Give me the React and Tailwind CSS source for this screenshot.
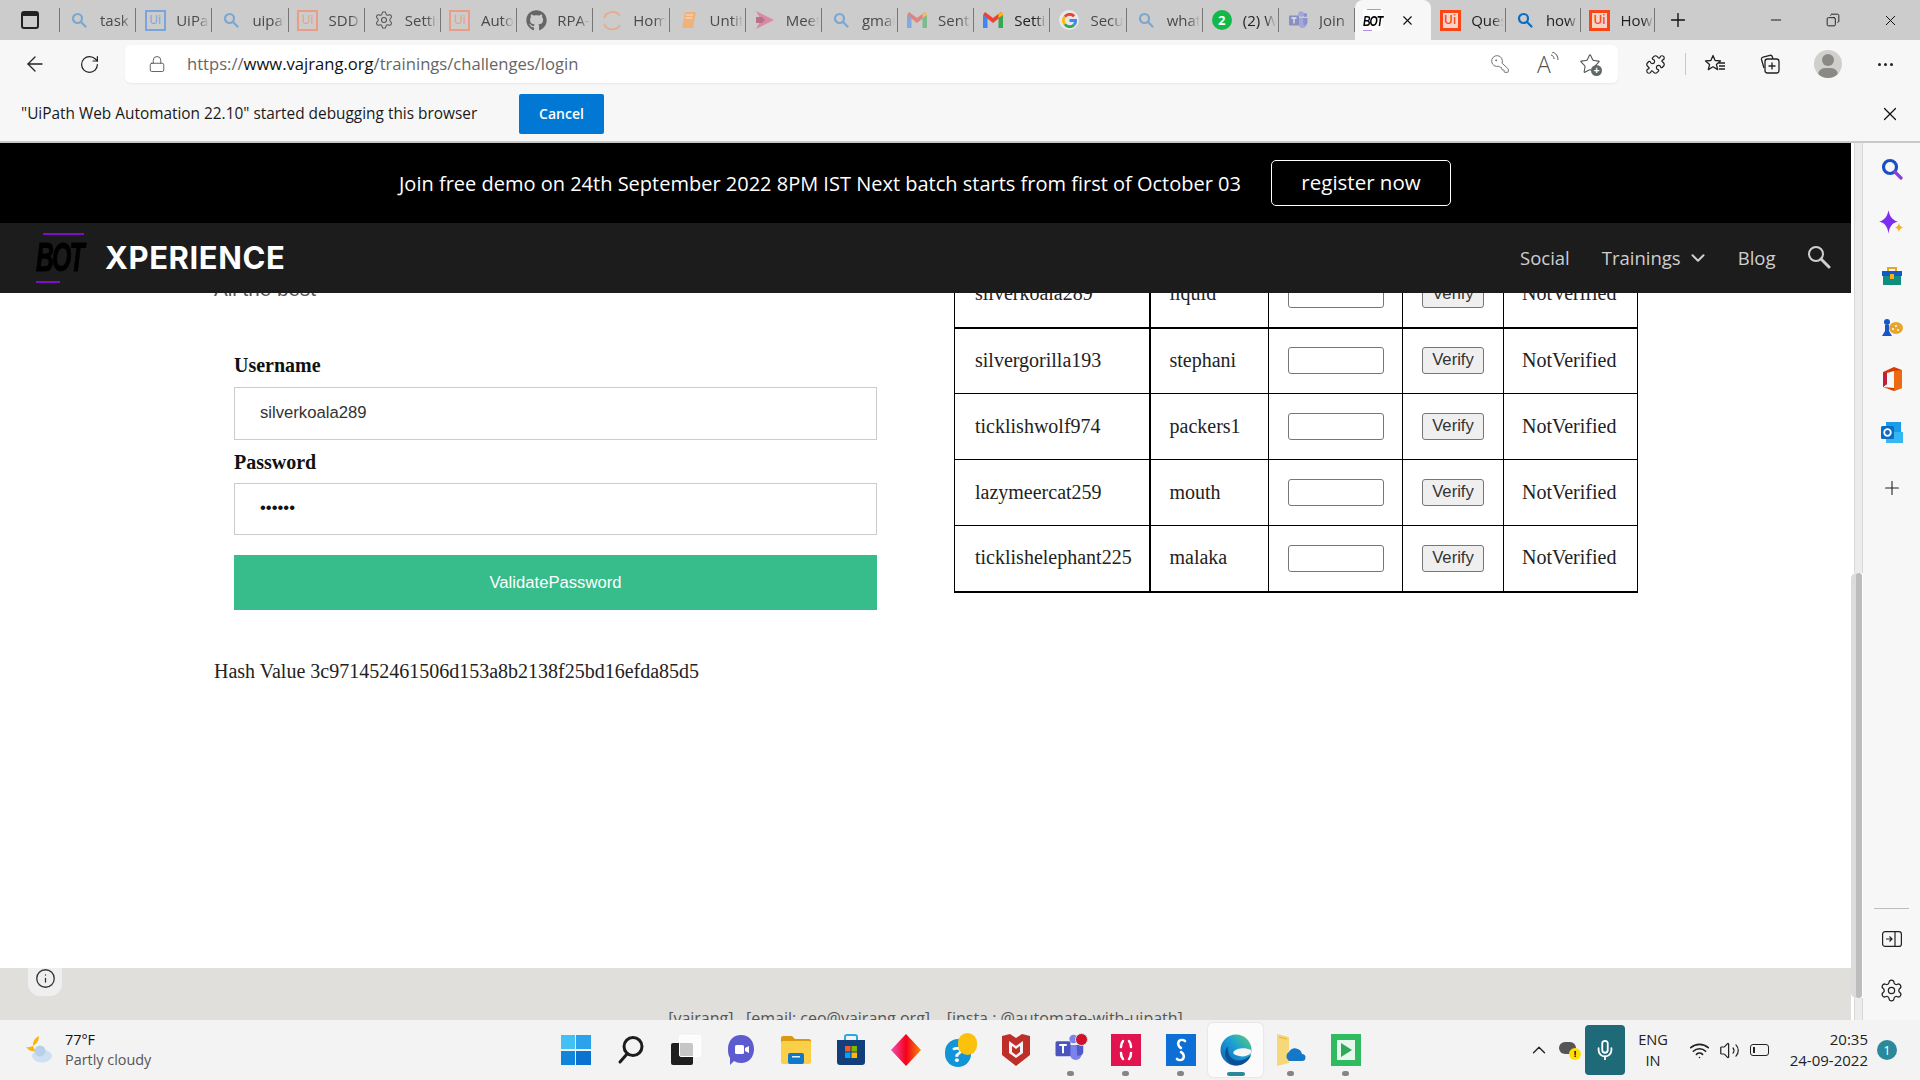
import React from 'react';
import { FaGithub } from 'react-icons/fa';
import {
  ArrowLeft, RotateCw, Lock, KeyRound, Puzzle, Star, ChevronDown, ChevronUp, X, Plus, Minus,
  Settings, Info, Mic, Wifi, Volume2, Copy,
} from 'lucide-react';

// Small favicon drawings used in the tab strip
const UiBox = ({ color, strong }) => (
  <span className={`flex w-[21px] h-[21px] items-center justify-center text-[12px] leading-none font-['Open_Sans',sans-serif] ${strong ? 'border-[3px] font-semibold bg-[#f6d5c8]' : 'border-2'}`} style={{ borderColor: color, color }}>
    Ui
  </span>
);

const Mag = ({ color = '#0f6cbd', size = 16 }) => (
  <svg width={size} height={size} viewBox="0 0 16 16" fill="none" stroke={color} strokeWidth="2.2">
    <circle cx="6.5" cy="6.5" r="4.5" />
    <path d="M10 10l4.5 4.5" strokeLinecap="round" />
  </svg>
);

const Swirl = () => (
  <svg width="22" height="22" viewBox="0 0 22 22" fill="none" stroke="#e9a98c" strokeWidth="1.8">
    <path d="M3 9a9 9 0 0 1 16-2" />
    <path d="M3 15a9 9 0 0 0 16 1" />
  </svg>
);

const Notebook = () => (
  <svg width="20" height="20" viewBox="0 0 20 20">
    <path d="M6 2h11l-3 16H3z" fill="#eeb27a" />
    <path d="M7 5h7M6.400 8h7" stroke="#fbe0c0" strokeWidth="1.200" />
  </svg>
);

const MeetArrow = () => (
  <svg width="20" height="20" viewBox="0 0 20 20">
    <path d="M1 1l18 9-18 9 5-9z" fill="#d98aa4" />
    <path d="M1 7h6l3 3-3 3H1z" fill="#b8708c" />
  </svg>
);

const GmailIcon = ({ faded }) => (
  <svg width="20" height="18" viewBox="0 0 20 16" opacity={faded ? 0.5 : 1}>
    <path d="M0 3v13h4.500V6z" fill="#4285f4" />
    <path d="M20 3v13h-4.500V6z" fill="#34a853" />
    <path d="M0 3l10 8 10-8-2-3-8 6-8-6z" fill="#ea4335" />
    <path d="M15.500 6l4.500-3-2-3-2.500 2z" fill="#fbbc04" />
  </svg>
);

const GoogleIcon = () => (
  <span className="flex w-[20px] h-[20px] items-center justify-center rounded-full bg-[#e8e8e8]">
    <svg width="15" height="15" viewBox="0 0 16 16" fill="none" strokeWidth="3">
      <path d="M13 3.500A6.500 6.500 0 0 0 3 4" stroke="#ea4335" />
      <path d="M3 4a6.500 6.500 0 0 0 0 8" stroke="#fbbc04" />
      <path d="M3 12a6.500 6.500 0 0 0 10 .5" stroke="#34a853" />
      <path d="M13 12.500A6.500 6.500 0 0 0 14.500 8H8" stroke="#4285f4" />
    </svg>
  </span>
);

const WhatsApp = () => (
  <span className="flex w-[20px] h-[20px] items-center justify-center rounded-full bg-[#12b94a] text-white text-[13px] font-bold leading-none font-['Open_Sans',sans-serif]">2</span>
);

const TeamsIcon = ({ size = 20, faded }) => (
  <svg width={size} height={size} viewBox="0 0 20 20" opacity={faded ? 0.5 : 1}>
    <circle cx="13" cy="4" r="2.800" fill="#7b83eb" />
    <circle cx="17.200" cy="5" r="2" fill="#5059c9" />
    <path d="M10 8h8.500v6a4 4 0 0 1-8 0z" fill="#7b83eb" />
    <path d="M15 8h4.500v5a3 3 0 0 1-4 2z" fill="#5059c9" />
    <rect x="1" y="5.500" width="10" height="10" rx="1" fill="#4b53bc" />
    <path d="M3.500 8h5M6 8v5.500" stroke="#fff" strokeWidth="1.300" />
  </svg>
);

const BotMark = ({ className }) => (
  <span className={className}>BOT</span>
);

const tabs = [
  { icon: <Mag color="#7ba7cf" />, label: 'task' },
  { icon: <UiBox color="#79a5dc" />, label: 'UiPath' },
  { icon: <Mag color="#7ba7cf" />, label: 'uipath' },
  { icon: <UiBox color="#eb9c84" />, label: 'SDD' },
  { icon: <Settings size={20} strokeWidth={1.3} color="#555" />, label: 'Settings' },
  { icon: <UiBox color="#eb9c84" />, label: 'Auto' },
  { icon: <FaGithub size={21} color="#666" />, label: 'RPA-' },
  { icon: <Swirl />, label: 'Home' },
  { icon: <Notebook />, label: 'Untitled' },
  { icon: <MeetArrow />, label: 'Meet' },
  { icon: <Mag color="#7ba7cf" />, label: 'gmail' },
  { icon: <GmailIcon faded />, label: 'Sent' },
  { icon: <GmailIcon />, label: 'Settings', dark: true },
  { icon: <GoogleIcon />, label: 'Secu' },
  { icon: <Mag color="#7ba7cf" />, label: 'what' },
  { icon: <WhatsApp />, label: '(2) W', dark: true },
  { icon: <TeamsIcon faded />, label: 'Join' },
];

const endTabs = [
  { icon: <UiBox color="#fa4616" strong />, label: 'Ques', dark: true },
  { icon: <Mag color="#0f6cbd" />, label: 'how', dark: true },
  { icon: <UiBox color="#fa4616" strong />, label: 'How', dark: true },
];

const Tab = ({ tab, width }) => (
  <div className={`${width} h-[40px] flex items-center shrink-0 relative`}>
    <div className="ml-[8px] w-[22px] h-[22px] shrink-0 flex items-center justify-center">{tab.icon}</div>
    <div className={`ml-[10px] w-[33px] overflow-hidden whitespace-nowrap text-[15px] [mask-image:linear-gradient(to_right,black_65%,transparent)] ${tab.dark ? 'text-[#222]' : 'text-[#4a4a4a]'}`}>
      {tab.label}
    </div>
    <div className="absolute right-0 top-[8px] h-[24px] w-[1px] bg-[#777]" />
  </div>
);

const TabStrip = () => (
  <div className="h-[40px] bg-[#cccccc] flex items-center shrink-0 font-['Open_Sans',sans-serif]">
    <div className="w-[60px] h-[40px] shrink-0 relative flex items-center pl-[21px]">
      <div className="w-[18px] h-[18px] rounded-[3px] border-2 border-[#222] border-t-[5px]" />
      <div className="absolute right-0 top-[8px] h-[24px] w-[1px] bg-[#777]" />
    </div>
    {tabs.map((t, i) => <Tab key={i} tab={t} width="w-[76.2px]" />)}
    <div className="w-[76px] h-[40px] shrink-0 bg-[#f7f7f7] rounded-t-lg flex items-center">
      <div className="ml-[8px] w-[20px] h-[22px] bg-white flex flex-col justify-between">
        <div className="ml-[4px] w-[14px] h-[1px] bg-[#b98be8]" />
        <BotMark className="text-[15px] leading-none italic font-black text-black tracking-[-1.5px] scale-x-[0.7] origin-left font-['Liberation_Sans',sans-serif]" />
        <div className="w-[9px] h-[1px] bg-[#b98be8]" />
      </div>
      <X size={15} strokeWidth={1.8} className="ml-[17px] text-[#111]" />
    </div>
    {endTabs.map((t, i) => <Tab key={i} tab={t} width="w-[74.7px]" />)}
    <Plus size={22} strokeWidth={1.5} className="ml-[12px] text-[#111]" />
    <Minus size={16} strokeWidth={1.4} className="ml-[79px] text-[#111]" />
    <Copy size={14} strokeWidth={1.5} className="ml-[42px] text-[#111] -scale-x-100" />
    <X size={17} strokeWidth={1.4} className="ml-[42px] text-[#111]" />
  </div>
);

const Slot = ({ className = '', children }) => (
  <div className={`w-[40px] h-[40px] shrink-0 flex items-center justify-center ${className}`}>{children}</div>
);

const StarLines = () => (
  <svg width="22" height="22" viewBox="0 0 22 22" fill="none" stroke="#222" strokeWidth="1.300">
    <path d="M9 2.500l2.100 5 5.400.4-4.100 3.500 1.300 5.200L9 13.800l-4.700 2.800 1.300-5.200-4.100-3.500 5.400-.4z" strokeLinejoin="round" />
    <path d="M14.500 10H21M15 13h6M15 16h6" />
  </svg>
);

const Collections = () => (
  <svg width="22" height="22" viewBox="0 0 22 22" fill="none" stroke="#222" strokeWidth="1.300">
    <path d="M5 15 2.500 6.500a2 2 0 0 1 1.500-2.400L11 2.300a2 2 0 0 1 2.300 1.400L14 6" />
    <rect x="6" y="6" width="14" height="14" rx="2.500" />
    <path d="M13 9.500v7M9.500 13h7" />
  </svg>
);

const FavPlus = () => (
  <span className="relative w-[24px] h-[24px] flex items-center justify-center">
    <Star size={22} strokeWidth={1.2} className="text-[#555]" />
    <span className="absolute right-0 bottom-0 w-[11px] h-[11px] rounded-full bg-[#666] text-white text-[10px] leading-[10px] text-center font-bold">+</span>
  </span>
);

const ReadAloud = () => (
  <span className="relative text-[23px] leading-none text-[#555] font-['Open_Sans',sans-serif] font-light">
    A
    <svg className="absolute -right-[9px] -top-[1px]" width="10" height="12" viewBox="0 0 10 12" fill="none" stroke="#555" strokeWidth="1">
      <path d="M1 3c2 .5 3 2 3 4M2 0c4 1 6 4 6 8" />
    </svg>
  </span>
);

const Toolbar = () => (
  <div className="h-[48px] bg-[#f7f7f7] flex items-center shrink-0 pl-[10px] font-['Open_Sans',sans-serif]">
    <div className="w-[50px] flex justify-center"><ArrowLeft size={24} strokeWidth={1.3} className="text-[#222]" /></div>
    <div className="w-[50px] ml-[4px] flex justify-center"><RotateCw size={21} strokeWidth={1.4} className="text-[#222]" /></div>
    <div className="ml-[11px] w-[1493px] h-[38px] bg-white rounded-[6px] flex items-center pl-[22px] pr-[6px] shadow-[0_1px_2px_rgba(0,0,0,0.06)]">
      <div className="w-[20px] flex justify-center"><Lock size={18} strokeWidth={1.2} className="text-[#555]" /></div>
      <div className="ml-[20px] flex-1 text-[16.600px] text-[#666] whitespace-nowrap">
        https://<span className="text-[#111]">www.vajrang.org</span>/trainings/challenges/login
      </div>
      <div className="w-[44px] flex justify-center -ml-[2px]"><KeyRound size={20} strokeWidth={1.1} className="text-[#666] -scale-x-100" /></div>
      <div className="w-[44px] flex justify-center mr-[2px]"><ReadAloud /></div>
      <div className="w-[44px] flex justify-center"><FavPlus /></div>
    </div>
    <Slot className="ml-[17px]"><Puzzle size={21} strokeWidth={1.4} className="text-[#222]" /></Slot>
    <div className="ml-[10px] w-[1px] h-[22px] bg-[#c8c8c8]" />
    <Slot className="ml-[9px]"><StarLines /></Slot>
    <Slot className="ml-[15px]"><Collections /></Slot>
    <Slot className="ml-[18px]">
      <span className="relative w-[28px] h-[28px] rounded-full bg-[#d0cfcb] overflow-hidden block">
        <span className="absolute left-[8px] top-[4px] w-[12px] h-[12px] rounded-full bg-[#8b8985]" />
        <span className="absolute left-[4px] top-[18px] w-[20px] h-[14px] rounded-full bg-[#8b8985]" />
      </span>
    </Slot>
    <Slot className="ml-[17px]">
      <span className="flex gap-[3px]">
        <span className="w-[3px] h-[3px] rounded-full bg-[#222]" />
        <span className="w-[3px] h-[3px] rounded-full bg-[#222]" />
        <span className="w-[3px] h-[3px] rounded-full bg-[#222]" />
      </span>
    </Slot>
  </div>
);

const InfoBar = () => (
  <div className="h-[55px] bg-[#f7f7f7] flex items-center shrink-0 pl-[21px] pb-[2px] border-b-[2px] border-[#c9c9c9] font-['Open_Sans',sans-serif]">
    <span className="w-[498px] text-[15.400px] text-[#1a1a1a] whitespace-nowrap">"UiPath Web Automation 22.10" started debugging this browser</span>
    <button className="w-[85px] h-[40px] bg-[#0078d4] rounded-[2px] text-white text-[14px] font-semibold">Cancel</button>
    <X size={22} strokeWidth={1.3} className="ml-[1275px] text-[#111]" />
  </div>
);

const rows = [
  ['silverkoala289', 'liquid'],
  ['silvergorilla193', 'stephani'],
  ['ticklishwolf974', 'packers1'],
  ['lazymeercat259', 'mouth'],
  ['ticklishelephant225', 'malaka'],
];

const ChallengeTable = () => (
  <table className="table-fixed border-collapse w-[683px] -mt-[32px] text-[20px] text-[#222] font-['Liberation_Serif',serif]">
    <colgroup>
      <col className="w-[195px]" />
      <col className="w-[119px]" />
      <col className="w-[134px]" />
      <col className="w-[101px]" />
      <col className="w-[134px]" />
    </colgroup>
    <tbody>
      {rows.map(([user, pass], i) => (
        <tr key={user} className={`h-[66px] ${i === 0 || i === rows.length - 1 ? 'border-b-[2px] border-black' : ''}`}>
          <td className="border border-black border-r-[2px] pl-[20px] pb-[2px] whitespace-nowrap">{user}</td>
          <td className="border border-black pl-[19px] pb-[2px]">{pass}</td>
          <td className="border border-black pl-[19px]">
            <input className="block w-[96px] h-[27px] bg-white border border-[#767676] rounded-[3px]" />
          </td>
          <td className="border border-black pl-[19px]">
            <button className="block w-[62px] h-[27px] bg-[#efefef] border border-[#767676] rounded-[3px] text-[16.67px] leading-none text-[#333] font-['Liberation_Sans',sans-serif]">Verify</button>
          </td>
          <td className="border border-black pl-[18px] pb-[2px]">NotVerified</td>
        </tr>
      ))}
    </tbody>
  </table>
);

const LoginForm = () => (
  <div className="w-[954px] shrink-0 pl-[214px]">
    <div className="-mt-[16px] h-[25px] text-[20.600px] leading-[24px] text-[#555] font-['Liberation_Sans',sans-serif]">All the best</div>
    <div className="pl-[20px] w-[663px]">
      <label className="block mt-[51px] h-[24px] text-[20px] leading-[24px] font-bold text-[#111] font-['Liberation_Serif',serif]">Username</label>
      <input readOnly value="silverkoala289" className="block mt-[10px] w-full h-[53px] pl-[25px] pb-[1px] border border-[#cccccc] text-[16.67px] text-[#333] font-['Liberation_Sans',sans-serif] outline-none" />
      <label className="block mt-[10px] h-[24px] text-[20px] leading-[24px] font-bold text-[#111] font-['Liberation_Serif',serif]">Password</label>
      <input readOnly type="password" value="secret" className="block mt-[9px] w-full h-[52px] pl-[25px] pb-[2px] border border-[#cccccc] text-[16.67px] text-[#111] font-['Liberation_Sans',sans-serif] outline-none" />
      <button className="block mt-[20px] w-full h-[55px] bg-[#37bc8b] text-white text-[16.67px] font-['Liberation_Sans',sans-serif]">ValidatePassword</button>
    </div>
    <p className="mt-[49px] text-[20px] leading-[24px] text-[#222] whitespace-nowrap font-['Liberation_Serif',serif]">Hash Value 3c971452461506d153a8b2138f25bd16efda85d5</p>
  </div>
);

const Page = () => (
  <div className="flex-1 min-w-0 flex flex-col">
    <div className="h-[80px] bg-black shrink-0 flex items-center pl-[399px] font-['Open_Sans',sans-serif]">
      <span className="w-[872px] mt-[1px] text-[20px] font-medium text-white whitespace-nowrap">Join free demo on 24th September 2022 8PM IST Next batch starts from first of October 03</span>
      <button className="w-[180px] h-[46px] border border-white rounded-[5px] pb-[2px] text-[20.500px] font-medium text-white">register now</button>
    </div>
    <div className="h-[70px] bg-[#1c1c1c] shrink-0 flex items-center pl-[36px] font-['Open_Sans',sans-serif]">
      <div className="relative w-[49px] h-[50px]">
        <div className="absolute left-[7px] top-0 w-[41px] h-[2px] bg-[#7a10c8]" />
        <BotMark className="absolute left-0 top-[5px] inline-block origin-left text-[40px] leading-[38px] font-black italic text-black tracking-[-3px] scale-x-[0.62] [-webkit-text-stroke:1px_black] font-['Liberation_Sans',sans-serif]" />
        <div className="absolute left-0 bottom-0 w-[24px] h-[2px] bg-[#7a10c8]" />
      </div>
      <span className="ml-[20px] w-[1415px] -mt-[1px] text-[31px] leading-none font-bold tracking-[0.6px] text-white font-['Inter',sans-serif]">XPERIENCE</span>
      <span className="text-[18.500px] text-[#cfcfcf]">Social</span>
      <span className="ml-[32px] text-[18.500px] text-[#cfcfcf]">Trainings</span>
      <ChevronDown size={22} strokeWidth={2.2} className="ml-[6px] text-[#cfcfcf]" />
      <span className="ml-[29px] text-[18.500px] text-[#cfcfcf]">Blog</span>
      <svg width="24" height="24" viewBox="0 0 24 24" fill="none" stroke="#cfcfcf" className="ml-[31px] -mt-[2px]">
        <circle cx="9" cy="9" r="7" strokeWidth="2" />
        <path d="M14 14l8 8" strokeWidth="3" strokeLinecap="round" />
      </svg>
    </div>
    <div className="flex-1 min-h-0 overflow-hidden bg-white flex">
      <LoginForm />
      <div><ChallengeTable /></div>
    </div>
    <div className="h-[52px] shrink-0 bg-[#e0dfdb] relative overflow-hidden text-center pt-[40px] text-[16px] leading-[20px] text-[#555] whitespace-pre font-['Open_Sans',sans-serif]">
      {'[vajrang]   [email: ceo@vajrang.org]    [insta : @automate-with-uipath]'}
      <div className="absolute left-[28px] top-0 w-[34px] h-[28px] pb-[8px] rounded-b-[12px] bg-[#efefef] flex items-center justify-center">
        <Info size={21} strokeWidth={1.5} className="text-[#333]" />
      </div>
    </div>
  </div>
);

const Scrollbar = () => (
  <div className="w-[12px] shrink-0 bg-white flex flex-col">
    <div className="h-[430px] shrink-0 ml-[3px] w-[9px] bg-[#ececec] border-l border-r border-[#d8d8d8]" />
    <div className="h-[425px] shrink-0 w-[11px] rounded-full bg-[#dcdcdc] flex justify-end">
      <div className="w-[6px] h-full rounded-full bg-[#bdbdbd]" />
    </div>
    <div className="flex-1 ml-[3px] w-[9px] bg-[#ececec] border-l border-r border-[#d8d8d8]" />
  </div>
);

const SideSlot = ({ className = '', children }) => (
  <div className={`h-[53px] shrink-0 flex items-center justify-center ${className}`}>{children}</div>
);

const Sidebar = () => (
  <div className="w-[57px] shrink-0 bg-[#f7f7f7] flex flex-col">
    <SideSlot className="pb-[2px]">
      <svg width="22" height="22" viewBox="0 0 22 22" fill="none" strokeWidth="3.200">
        <circle cx="9" cy="9" r="6.500" stroke="#1b4fc4" />
        <path d="M14 14l6 6" stroke="#8a3fd8" strokeLinecap="round" />
      </svg>
    </SideSlot>
    <SideSlot>
      <svg width="26" height="28" viewBox="0 0 22 24">
        <path d="M8 1c1 5 3 8 8 10-5 1-7 4-8 10-1-6-3-9-8-10 5-2 7-5 8-10z" fill="#7c2df0" />
        <path d="M17 12c.4 2 1 3 3.500 4-2.500.5-3 1.500-3.500 4-.5-2.500-1-3.500-3.500-4 2.500-1 3-2 3.500-4z" fill="#f6b21b" />
      </svg>
    </SideSlot>
    <SideSlot>
      <svg width="22" height="20" viewBox="0 0 22 20">
        <path d="M7 5V2h8v3" fill="none" stroke="#e7a52a" strokeWidth="2" />
        <rect x="1" y="5" width="20" height="5" fill="#1458c8" />
        <rect x="2" y="10" width="18" height="9" fill="#0f8d7e" />
        <rect x="9" y="8" width="4" height="5" fill="#f3b11e" />
      </svg>
    </SideSlot>
    <SideSlot className="pb-[2px]">
      <svg width="22" height="20" viewBox="0 0 22 20">
        <circle cx="6" cy="4" r="3" fill="#1458c8" />
        <path d="M4 7h4v6l3 5H1l3-5z" fill="#1458c8" />
        <ellipse cx="15" cy="10" rx="7" ry="6" fill="#e7a52a" />
        <circle cx="15" cy="8" r="1" fill="#fff" /><circle cx="12" cy="11" r="1" fill="#fff" /><circle cx="17" cy="12" r="1" fill="#fff" />
      </svg>
    </SideSlot>
    <SideSlot className="pb-[6px]">
      <svg width="20" height="24" viewBox="0 0 20 24">
        <path d="M12 0l8 3v18l-8 3-11-4 11 1V4L5 6v11l-4 3V5z" fill="#d83b01" />
        <path d="M1 5l4 1v11l-4 3z" fill="#c01e3c" />
        <path d="M12 4l8-1v18l-8 3z" fill="#eb6a12" />
      </svg>
    </SideSlot>
    <SideSlot className="pb-[4px]">
      <svg width="22" height="21" viewBox="0 0 22 21">
        <rect x="5" y="0" width="15" height="10" fill="#1a9ce8" />
        <path d="M5 10h17v11H5z" fill="#35b8f1" />
        <rect x="0" y="4" width="13" height="13" rx="1.500" fill="#0a6cc4" />
        <circle cx="6.500" cy="10.500" r="3.300" fill="none" stroke="#fff" strokeWidth="1.800" />
      </svg>
    </SideSlot>
    <SideSlot><Plus size={22} strokeWidth={1.2} className="text-[#222]" /></SideSlot>
    <div className="flex-1" />
    <div className="mx-[11px] h-[1px] bg-[#bdbdbd]" />
    <div className="h-[60px] shrink-0 flex items-center justify-center">
      <svg width="20" height="16" viewBox="0 0 20 16" fill="none" stroke="#222" strokeWidth="1.200">
        <rect x=".6" y=".6" width="18.800" height="14.800" rx="2.500" />
        <path d="M13 1v14M4 8h6M7.500 5.500 10 8l-2.500 2.500" />
      </svg>
    </div>
    <div className="h-[42px] shrink-0 flex items-center justify-center">
      <Settings size={25} strokeWidth={1.2} className="text-[#222]" />
    </div>
    <div className="h-[9px] shrink-0" />
  </div>
);

// Taskbar drawings, each about 30px
const IconStart = () => (
  <div className="grid grid-cols-2 gap-[1.500px] w-[30px] h-[30px]">
    <div className="bg-[#45c0f5]" /><div className="bg-[#2aa2ec]" /><div className="bg-[#0f86dc]" /><div className="bg-[#0a72cf]" />
  </div>
);
const IconSearch = () => (
  <svg width="28" height="30" viewBox="0 0 28 30" fill="none" stroke="#1c1c1c" strokeWidth="3">
    <circle cx="16" cy="11.500" r="9" />
    <path d="M10 19l-7 8" strokeLinecap="round" />
  </svg>
);
const IconTaskView = () => (
  <div className="relative w-[30px] h-[30px]">
    <div className="absolute left-0 bottom-0 w-[22px] h-[22px] rounded-[2px] bg-[#1e1e1e]" />
    <div className="absolute right-0 top-0 w-[22px] h-[22px] rounded-[2px] bg-white/75 border border-white" />
  </div>
);
const IconChat = () => (
  <svg width="30" height="32" viewBox="0 0 30 32">
    <path d="M15 1c8 0 13 6 13 14s-5 14-13 14c-3 0-5-1-7-2l-4 4v-7C2 21 2 18 2 15 2 7 7 1 15 1z" fill="#5d5bd0" />
    <rect x="9" y="11" width="9" height="9" rx="1.500" fill="#fff" />
    <path d="M19 14l4-2v7l-4-2z" fill="#fff" />
  </svg>
);
const IconFolder = () => (
  <svg width="30" height="28" viewBox="0 0 30 28">
    <path d="M0 2a2 2 0 0 1 2-2h9l3 3h14a2 2 0 0 1 2 2v3H0z" fill="#d99a10" />
    <rect x="0" y="5" width="30" height="23" rx="2" fill="#fbcf48" />
    <rect x="7" y="17" width="16" height="11" rx="2" fill="#0f78c8" />
    <rect x="11" y="20" width="8" height="1.500" fill="#dff1ff" />
  </svg>
);
const IconStore = () => (
  <svg width="30" height="32" viewBox="0 0 30 32">
    <path d="M9 6V3a2 2 0 0 1 2-2h8a2 2 0 0 1 2 2v3" fill="none" stroke="#29a8e8" strokeWidth="2" />
    <path d="M1 6h28v22a3 3 0 0 1-3 3H4a3 3 0 0 1-3-3z" fill="#123f7c" />
    <rect x="9" y="12" width="5.500" height="5.500" fill="#ef5a2b" /><rect x="15.500" y="12" width="5.500" height="5.500" fill="#7eb900" />
    <rect x="9" y="18.500" width="5.500" height="5.500" fill="#00a4ef" /><rect x="15.500" y="18.500" width="5.500" height="5.500" fill="#ffb900" />
  </svg>
);
const IconDiamond = () => (
  <svg width="30" height="32" viewBox="0 0 30 32">
    <defs>
      <linearGradient id="dg" x1="0" x2="1">
        <stop offset="0" stopColor="#f24fb0" /><stop offset=".5" stopColor="#f5001d" /><stop offset="1" stopColor="#f58a0a" />
      </linearGradient>
    </defs>
    <path d="M15 0l15 16-15 16L0 16z" fill="url(#dg)" />
  </svg>
);
const IconHelp = () => (
  <div className="relative w-[32px] h-[34px]">
    <div className="absolute left-0 bottom-0 w-[26px] h-[28px] rounded-full bg-[#1295d8] text-white text-[22px] leading-[28px] font-bold text-center font-['Open_Sans',sans-serif]">?</div>
    <div className="absolute right-0 top-0 w-[19px] h-[22px] rounded-full bg-[#fcc10c]" />
  </div>
);
const IconMcAfee = () => (
  <svg width="28" height="32" viewBox="0 0 28 32">
    <path d="M0 2l8-2 6 4 6-4 8 2v19L14 32 0 21z" fill="#bf2f2a" />
    <path d="M7 7l7 5 7-5v12l-7 5-7-5z" fill="#f4f3f3" />
    <path d="M10 12l4 3 4-3v6l-4 3-4-3z" fill="#bf2f2a" />
  </svg>
);
const IconTeams = () => (
  <div className="relative w-[34px] h-[34px]">
    <TeamsIcon size={30} />
    <div className="absolute right-0 top-0 w-[13px] h-[13px] rounded-full bg-[#d1112b] border border-[#dddddd]" />
  </div>
);
const IconRedTile = () => (
  <div className="w-[30px] h-[32px] bg-[#e2144f] flex items-center justify-center">
    <svg width="18" height="24" viewBox="0 0 18 24" fill="none" stroke="#fff" strokeWidth="2.500" strokeLinecap="round">
      <path d="M6 3a9 9 0 0 0-2 6M12 3a9 9 0 0 1 2 6M4 15a9 9 0 0 0 2 6M14 15a9 9 0 0 1-2 6" />
    </svg>
  </div>
);
const IconBlueTile = () => (
  <div className="w-[30px] h-[32px] bg-[#0d6fd6] flex items-center justify-center">
    <svg width="18" height="26" viewBox="0 0 18 26" fill="none" stroke="#fff" strokeWidth="2.600" strokeLinecap="round">
      <path d="M13 4a4 3 0 0 0-6 0c-2 3 0 6 2 7M5 22a4 3 0 0 0 6 0c2-3 0-6-2-7" />
    </svg>
  </div>
);
const IconEdge = () => (
  <svg width="32" height="32" viewBox="0 0 32 32">
    <defs>
      <linearGradient id="eg" x1="0" y1="1" x2="1" y2="0">
        <stop offset="0" stopColor="#0b5fae" /><stop offset=".55" stopColor="#1b9ed8" /><stop offset="1" stopColor="#5fd36a" />
      </linearGradient>
    </defs>
    <circle cx="16" cy="16" r="15.500" fill="url(#eg)" />
    <path d="M31 21c-2 6-8 10.500-15 10.500-3 0-5-1-7-3-5-5-5-13-1-16-1 7 3 14 10 14 5 0 9-2 13-5.500z" fill="#0b4f96" />
    <path d="M14 17c3-3 11-4 17-1v3c-3 3-8 4-12 3-4-1-7-2-5-5z" fill="#f6f6f6" />
  </svg>
);
const IconFolderCloud = () => (
  <svg width="30" height="32" viewBox="0 0 30 32">
    <path d="M1 0l12 3v26L1 32z" fill="#f6d77a" />
    <path d="M3 3l8 2" stroke="#e2b33d" />
    <path d="M12 26a5 5 0 0 1 1-8 7 7 0 0 1 13 2 3.500 3.500 0 0 1 0 7H13z" fill="#1677c8" />
  </svg>
);
const IconGreen = () => (
  <div className="w-[30px] h-[32px] bg-[#2fbb60] flex items-center justify-center">
    <div className="w-[22px] h-[24px] bg-[#e6f8ec] border-2 border-[#2fbb60] flex items-center justify-center">
      <svg width="12" height="14" viewBox="0 0 12 14"><path d="M1 0l11 7-11 7z" fill="#2fa85a" /></svg>
    </div>
  </div>
);

const taskIcons = [
  { icon: <IconStart /> },
  { icon: <IconSearch /> },
  { icon: <IconTaskView /> },
  { icon: <IconChat /> },
  { icon: <IconFolder /> },
  { icon: <IconStore /> },
  { icon: <IconDiamond /> },
  { icon: <IconHelp /> },
  { icon: <IconMcAfee /> },
  { icon: <IconTeams />, dot: true },
  { icon: <IconRedTile />, dot: true },
  { icon: <IconBlueTile />, dot: true },
  { icon: <IconEdge />, active: true },
  { icon: <IconFolderCloud />, dot: true },
  { icon: <IconGreen />, dot: true },
];

const Taskbar = () => (
  <div className="h-[60px] bg-[#f3f3f3] shrink-0 flex items-center font-['Open_Sans',sans-serif]">
    <div className="w-[548px] shrink-0 flex items-center pl-[25px]">
      <svg width="28" height="30" viewBox="0 0 28 30">
        <path d="M14 1a10 10 0 0 0-6 10 9 9 0 0 0 3 5 10 10 0 0 1-10-4 11 11 0 0 0 13-11z" fill="#f7b512" />
        <ellipse cx="17" cy="21" rx="10" ry="6.500" fill="#cfe0f2" />
        <circle cx="15" cy="16" r="5.500" fill="#b9d0ea" />
      </svg>
      <div className="ml-[12px] text-[14.400px] leading-[20px]">
        <div className="text-[#111]">77°F</div>
        <div className="text-[#555]">Partly cloudy</div>
      </div>
    </div>
    {taskIcons.map((t, i) => (
      <div key={i} className={`w-[55px] h-[54px] shrink-0 flex flex-col items-center justify-center relative rounded-[5px] ${t.active ? 'bg-[#fbfbfb] shadow-[0_0_2px_rgba(0,0,0,0.15)]' : ''}`}>
        {t.icon}
        {t.dot && <div className="absolute bottom-[1px] w-[7px] h-[5px] rounded-full bg-[#858585]" />}
        {t.active && <div className="absolute bottom-[1px] w-[18px] h-[4px] rounded-full bg-[#2a8a9c]" />}
      </div>
    ))}
    <ChevronUp size={22} strokeWidth={1.5} className="ml-[155px] shrink-0 text-[#222]" />
    <div className="ml-[9px] relative w-[22px] h-[20px] shrink-0">
      <div className="absolute left-0 top-[2px] w-[17px] h-[12px] rounded-full bg-[#555]" />
      <div className="absolute right-0 bottom-0 w-[12px] h-[12px] rounded-full bg-[#fce100] text-[9px] leading-[12px] text-center font-bold text-black">!</div>
    </div>
    <div className="ml-[4px] w-[40px] h-[50px] shrink-0 rounded-[4px] bg-[#1e6a78] flex items-center justify-center">
      <Mic size={22} strokeWidth={2} className="text-white" />
    </div>
    <div className="ml-[10px] w-[36px] shrink-0 text-center text-[14.600px] leading-[21px] text-[#222]">ENG<br />IN</div>
    <Wifi size={21} strokeWidth={1.9} className="ml-[18px] shrink-0 text-[#222]" />
    <Volume2 size={21} strokeWidth={1.4} className="ml-[9px] shrink-0 text-[#222]" />
    <div className="ml-[10px] w-[19px] h-[12px] shrink-0 rounded-[3px] border border-[#222] flex items-center pl-[2px]">
      <div className="w-[2px] h-[6px] bg-[#222]" />
    </div>
    <div className="w-[99px] shrink-0 text-right text-[15px] leading-[21px] text-[#222]">
      <div>20:35</div>
      <div>24-09-2022</div>
    </div>
    <div className="ml-[9px] w-[20px] h-[20px] shrink-0 rounded-full bg-[#2a8a9c] text-white text-[13px] leading-[20px] text-center">1</div>
  </div>
);

export default function App() {
  return (
    <div className="w-[1920px] h-[1080px] overflow-hidden flex flex-col bg-white">
      <TabStrip />
      <Toolbar />
      <InfoBar />
      <div className="flex-1 min-h-0 flex">
        <Page />
        <Scrollbar />
        <Sidebar />
      </div>
      <Taskbar />
    </div>
  );
}
